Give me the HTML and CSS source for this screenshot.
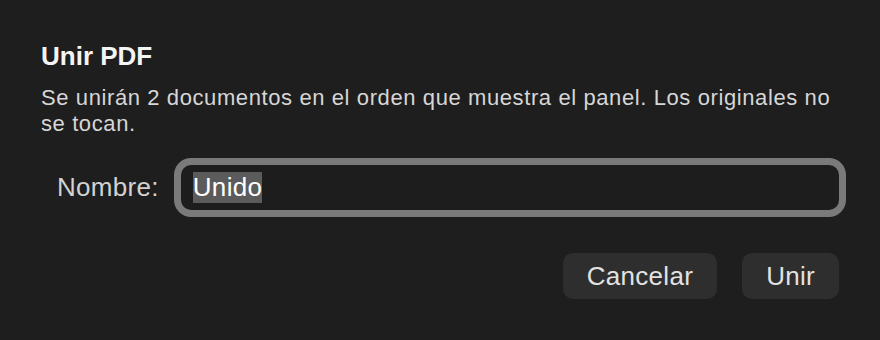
FILE: index.html
```html
<html>
	<head>
		<title>Unir PDF</title>
		<meta name="viewport" content="width=device-width, initial-scale=1">
		<link rel="stylesheet" href="styles.css">
	</head>
	<body>
		<div class="dialog">
			<h1 class="title">Unir PDF</h1>
			<p class="message">Se unirán 2 documentos en el orden que muestra el panel. Los originales no se tocan.</p>
			<div class="fieldRow">
				<label class="label" for="name">Nombre:</label>
				<div class="field" id="name"><span class="selected">Unido</span></div>
			</div>
			<div class="actions">
				<button class="button">Cancelar</button>
				<button class="button">Unir</button>
			</div>
		</div>
	</body>
</html>
```

FILE: styles.css
```css
html{background: #1e1e1e;}
body{margin: 0; font-family: "Liberation Sans", Arial, sans-serif; color: #e4e4e4;}
.dialog{padding: 40px 41px 0 41px;}
.title{margin: 0; font-size: 26px; line-height: 32px; font-weight: bold; color: #f4f4f4;}
.message{margin: 13px 0 0; font-size: 22px; line-height: 26px; letter-spacing: 0.6px; color: #d6d6d6; padding-right: 6px;}
.fieldRow{display: flex; align-items: center; margin-top: 28px;}
.label{margin-left: 16px; font-size: 26px; letter-spacing: 0.3px; color: #d2d2d2;}
.field{flex: 1; margin-left: 22px; height: 45px; display: flex; align-items: center; padding-left: 12px;
	border-radius: 10px; background: #1d1d1d; box-shadow: 0 0 0 7px #7a7a7a;}
.selected{background: #5b5b5b; color: #ffffff; font-size: 26px; line-height: 31px; letter-spacing: 0.3px;}
.actions{display: flex; justify-content: flex-end; gap: 25px; margin-top: 43px;}
.button{height: 46px; padding: 0 24px; border: none; border-radius: 10px; background: #2e2e2e;
	color: #e2e2e2; font-family: inherit; font-size: 26px; letter-spacing: 0.3px;}
```
